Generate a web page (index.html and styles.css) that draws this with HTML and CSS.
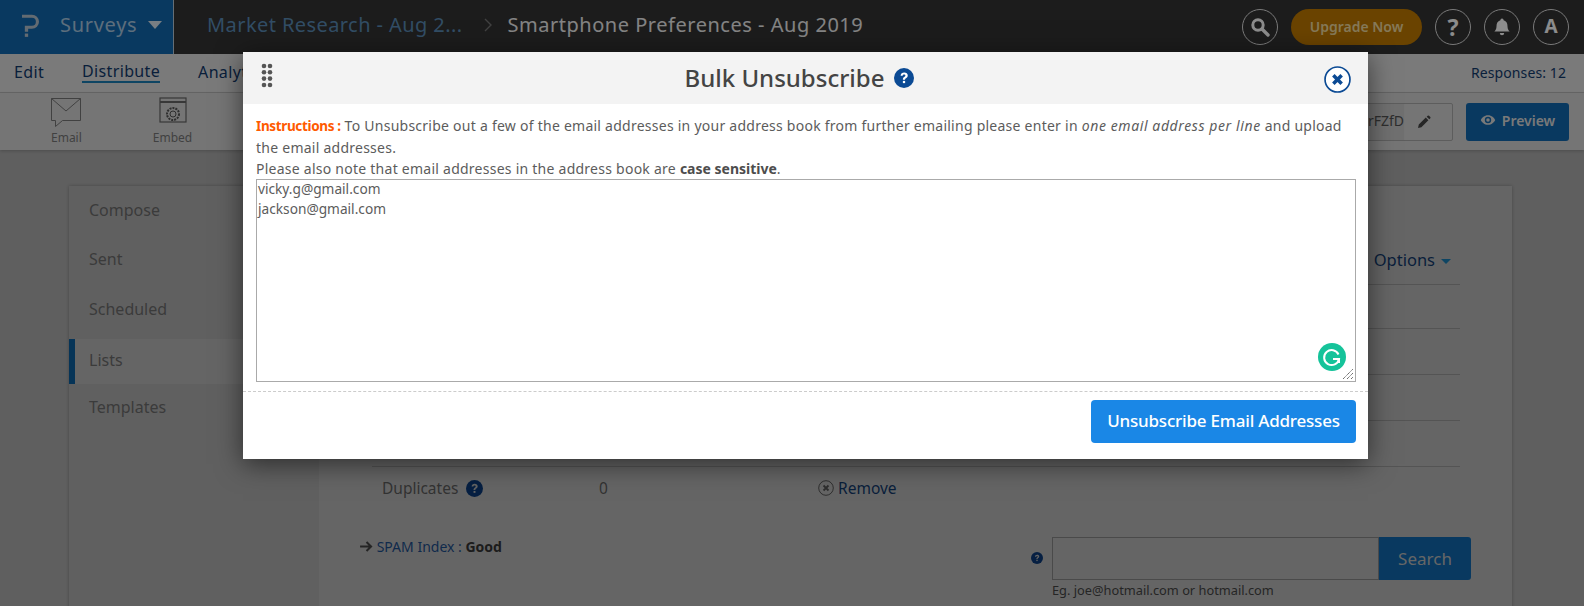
FILE: index.html
```html
<!DOCTYPE html>
<html lang="en">
<head>
<meta charset="utf-8">
<title>Bulk Unsubscribe</title>
<link rel="stylesheet" href="styles.css">
</head>
<body>
<header class="topbar">
  <div class="brand">
    <svg class="logo" viewBox="0 0 18 24"><path d="M0 0h10.500a7.500 7.500 0 0 1 0 15H6.500v3H3v-6.300h7.500a4.200 4.200 0 0 0 0-8.400H0z" fill="#b5c3cf"/><rect x="3" y="20" width="3.500" height="3.500" fill="#b5c3cf"/></svg>
    <span class="brand-name">Surveys</span>
    <span class="caret"></span>
  </div>
  <nav class="crumbs">
    <span class="crumb-link">Market Research - Aug 2...</span>
    <svg class="crumb-sep" viewBox="0 0 8 14"><path d="M1 1l6 6-6 6" fill="none" stroke="#777" stroke-width="1.400"/></svg>
    <span class="crumb-current">Smartphone Preferences - Aug 2019</span>
  </nav>
  <div class="top-actions">
    <span class="round"><svg viewBox="0 0 20 20" class="ri"><circle cx="8" cy="8" r="5.200" fill="none" stroke="#fff" stroke-width="3"/><path d="M12 12l6 6" stroke="#fff" stroke-width="3.400" stroke-linecap="round"/></svg></span>
    <span class="upgrade">Upgrade Now</span>
    <span class="round round-text round-q">?</span>
    <span class="round"><svg viewBox="0 0 20 20" class="ri"><path d="M10 1.500a1.600 1.600 0 0 1 1.600 1.700c3 .8 3.900 3.300 3.900 6 0 3 1.100 4.200 2.200 5.300H2.300c1.100-1.100 2.200-2.300 2.200-5.300 0-2.700.9-5.200 3.900-6A1.600 1.600 0 0 1 10 1.500zM7.800 16h4.400a2.200 2.200 0 0 1-4.400 0z" fill="#fff"/></svg></span>
    <span class="round round-text">A</span>
  </div>
</header>

<div class="subnav">
  <div class="subnav-links">
    <a class="subnav-link">Edit</a>
    <a class="subnav-link is-active">Distribute</a>
    <a class="subnav-link">Analytics</a>
  </div>
  <span class="responses">Responses: 12</span>
</div>

<div class="toolbar">
  <div class="tools">
    <div class="tool">
      <svg class="tool-icon" viewBox="0 0 30 30"><path d="M.5 1.500h29v22h-18l-7 6v-6h-4z" fill="none" stroke="#777" stroke-width="1"/><path d="M.5 1.500L15 14 29.500 1.500" fill="none" stroke="#777" stroke-width="1"/></svg>
      <span>Email</span>
    </div>
    <div class="tool">
      <svg class="tool-icon" viewBox="0 0 30 30"><rect x="2" y="1" width="26" height="24" fill="none" stroke="#666" stroke-width="1.200"/><path d="M2 5h26" stroke="#666" stroke-width="2"/><circle cx="15" cy="17" r="6" fill="none" stroke="#555" stroke-width="2" stroke-dasharray="2 1"/><circle cx="15" cy="17" r="3" fill="none" stroke="#555"/></svg>
      <span>Embed</span>
    </div>
  </div>
  <div class="toolbar-right">
    <div class="link-box"><span class="link-text">lrFZfD</span><span class="link-edit"><svg viewBox="0 0 14 14" class="pencil"><path d="M1 13l.8-3.400 7-7 2.600 2.600-7 7zM9.700 1.700l1-1a1 1 0 0 1 1.300 0l1.300 1.300a1 1 0 0 1 0 1.300l-1 1z" fill="#444"/></svg></span></div>
    <button class="preview"><svg viewBox="0 0 20 14" class="eye"><path d="M10 1C5.500 1 2.300 4 1 7c1.300 3 4.500 6 9 6s7.700-3 9-6c-1.300-3-4.500-6-9-6zm0 10a4 4 0 1 1 0-8 4 4 0 0 1 0 8z" fill="#ddd"/><circle cx="10" cy="7" r="2.200" fill="#ddd"/></svg>Preview</button>
  </div>
</div>

<main class="content">
  <section class="card">
    <aside class="side">
      <a class="side-item">Compose</a>
      <a class="side-item">Sent</a>
      <a class="side-item">Scheduled</a>
      <a class="side-item is-active">Lists</a>
      <a class="side-item">Templates</a>
    </aside>
    <div class="main">
      <div class="options-row"><span class="options">Options<span class="mini-caret"></span></span></div>
      <div class="line-row line-first"></div>
      <div class="line-row"></div>
      <div class="line-row"></div>
      <div class="line-row"></div>
      <div class="dup-row">
        <span class="dup-label">Duplicates <svg class="help" viewBox="0 0 16 16"><circle cx="8" cy="8" r="8" fill="#0b3a78"/><path d="M5.300 6.200C5.400 4.500 6.600 3.600 8.200 3.600c1.600 0 2.800.9 2.800 2.300 0 1.200-.7 1.700-1.400 2.200-.6.400-.8.700-.8 1.300H7.100c0-1.100.3-1.700 1-2.200.6-.4 1-.7 1-1.200 0-.5-.4-.8-1-.8-.7 0-1.100.4-1.200 1z" fill="#b5b5b5"/><rect x="7.100" y="10.300" width="1.800" height="1.800" fill="#b5b5b5"/></svg></span>
        <span class="dup-count">0</span>
        <span class="dup-remove"><svg class="remove-icon" viewBox="0 0 16 16"><circle cx="8" cy="8" r="7.300" fill="none" stroke="#555" stroke-width="1"/><path d="M5.500 5.500l5 5m0-5l-5 5" stroke="#555" stroke-width="1.800"/></svg>Remove</span>
      </div>
      <div class="bottom-row">
        <div class="spam"><svg class="arrow" viewBox="0 0 14 12"><path d="M0 6h11M7 1l5 5-5 5" fill="none" stroke="#444" stroke-width="2.200"/></svg> <span class="spam-label">SPAM Index :</span> <b>Good</b></div>
        <div class="search-wrap">
          <svg class="help help-small" viewBox="0 0 16 16"><circle cx="8" cy="8" r="8" fill="#0b3a78"/><path d="M5.300 6.200C5.400 4.500 6.600 3.600 8.200 3.600c1.600 0 2.800.9 2.800 2.300 0 1.200-.7 1.700-1.400 2.200-.6.400-.8.700-.8 1.300H7.100c0-1.100.3-1.700 1-2.200.6-.4 1-.7 1-1.200 0-.5-.4-.8-1-.8-.7 0-1.100.4-1.200 1z" fill="#b5b5b5"/><rect x="7.100" y="10.300" width="1.800" height="1.800" fill="#b5b5b5"/></svg>
          <div class="search-col">
            <div class="search-box"><span class="search-input"></span><span class="search-btn">Search</span></div>
            <div class="search-hint">Eg. joe@hotmail.com or hotmail.com</div>
          </div>
        </div>
      </div>
    </div>
  </section>
</main>

<div class="overlay"></div>

<div class="modal">
  <div class="modal-head">
    <svg class="grip" viewBox="0 0 12 25"><g fill="#555"><circle cx="3" cy="3" r="2.300"/><circle cx="9" cy="3" r="2.300"/><circle cx="3" cy="9.300" r="2.300"/><circle cx="9" cy="9.300" r="2.300"/><circle cx="3" cy="15.600" r="2.300"/><circle cx="9" cy="15.600" r="2.300"/><circle cx="3" cy="22" r="2.300"/><circle cx="9" cy="22" r="2.300"/></g></svg>
    <h2 class="modal-title">Bulk Unsubscribe <svg class="title-help" viewBox="0 0 16 16"><circle cx="8" cy="8" r="8" fill="#0b4a94"/><path d="M5.300 6.200C5.400 4.500 6.600 3.600 8.200 3.600c1.600 0 2.800.9 2.800 2.300 0 1.200-.7 1.700-1.400 2.200-.6.400-.8.700-.8 1.300H7.100c0-1.100.3-1.700 1-2.200.6-.4 1-.7 1-1.200 0-.5-.4-.8-1-.8-.7 0-1.100.4-1.200 1z" fill="#fff"/><rect x="7.100" y="10.300" width="1.800" height="1.800" fill="#fff"/></svg></h2>
    <svg class="close" viewBox="0 0 26 26"><circle cx="13" cy="13" r="12" fill="#fff" stroke="#0b4a94" stroke-width="1.600"/><path d="M9 9l8 8m0-8l-8 8" stroke="#0b4a94" stroke-width="3.400"/></svg>
  </div>
  <div class="modal-body">
    <p class="instructions"><b class="instr-label">Instructions :</b> To Unsubscribe out a few of the email addresses in your address book from further emailing please enter in <i>one email address per line</i> and upload the email addresses.<br>Please also note that email addresses in the address book are <b>case sensitive</b>.</p>
    <div class="area">
      <div class="area-text">vicky.g@gmail.com<br>jackson@gmail.com</div>
      <svg class="grammarly" viewBox="0 0 28 28"><circle cx="14" cy="14" r="14" fill="#15c39a"/><path d="M20.500 11.500A7.500 7.500 0 1 0 21 16h-6" fill="none" stroke="#fff" stroke-width="2"/><path d="M21 16v4" stroke="#fff" stroke-width="2"/></svg>
      <svg class="resize" viewBox="0 0 12 12"><path d="M1 11L11 1M5 11l6-6M9 11l2-2" stroke="#555" stroke-width="1" fill="none" stroke-dasharray="1.200 .6"/></svg>
    </div>
  </div>
  <div class="modal-foot"><button class="primary">Unsubscribe Email Addresses</button></div>
</div>
</body>
</html>
```
FILE: styles.css
```css
* { box-sizing: border-box; }
html, body { margin: 0; height: 606px; overflow: hidden; }
body { position: relative; background: #adadad; font-family: "Noto Sans", "Open Sans", sans-serif; color: #333; }

.topbar { display: flex; align-items: stretch; height: 54px; background: #333; }
.brand { width: 174px; display: flex; align-items: center; padding: 0 0 5px 22px; background: #1269af; border-right: 1px solid #b9c8d6; }
.logo { width: 17px; height: 24px; margin: 3px 21px 0 0; }
.brand-name { font-size: 20px; letter-spacing: .7px; color: #a9c8e2; }
.caret { margin-left: 11px; border-left: 7px solid transparent; border-right: 7px solid transparent; border-top: 8px solid #dbe6ef; }
.crumbs { display: flex; align-items: center; padding: 0 0 5px 33px; font-size: 20px; flex: 1; }
.crumb-link { color: #5b8db8; letter-spacing: .42px; }
.crumb-sep { width: 8px; height: 14px; margin: 0 16px 0 21px; }
.crumb-current { color: #f0f0f0; letter-spacing: .52px; }
.top-actions { display: flex; align-items: center; gap: 13px; padding-right: 15px; }
.round { width: 36px; height: 36px; border-radius: 50%; border: 1px solid #ddd; display: flex; align-items: center; justify-content: center; color: #fff; }
.round-text { font-size: 19px; font-weight: 700; padding-bottom: 2px; }
.round-q { font-size: 23px; padding-bottom: 0; }
.ri { width: 20px; height: 20px; }
.upgrade { width: 131px; height: 36px; border-radius: 18px; background: #c17a00; color: #f2dca0; font-size: 14px; font-weight: 600; display: flex; align-items: center; justify-content: center; padding-bottom: 2px; }

.subnav { height: 39px; background: #dedede; border-bottom: 1px solid #bbb; display: flex; justify-content: space-between; align-items: center; padding: 0 18px 2px 14px; }
.subnav-links { display: flex; gap: 38px; }
.subnav-link { font-size: 16px; letter-spacing: .35px; color: #123a6c; }
.subnav-link.is-active { border-bottom: 2px solid #1a7fb5; line-height: 20px; }
.responses { font-size: 14px; letter-spacing: .1px; color: #123a6c; }

.toolbar { height: 57px; background: #d5d5d5; display: flex; justify-content: space-between; align-items: center; padding: 0 15px 0 51px; box-shadow: 0 1px 3px rgba(0,0,0,.2); }
.tools { display: flex; gap: 71px; }
.tool { display: flex; flex-direction: column; align-items: center; gap: 2px; font-size: 12px; color: #777; }
.tool-icon { width: 30px; height: 30px; }
.toolbar-right { display: flex; align-items: center; gap: 13px; }
.link-box { display: flex; align-items: center; height: 38px; border: 1px solid #aaa; border-radius: 2px; width: 110px; overflow: hidden; font-size: 14px; }
.link-text { flex: 1; text-align: right; color: #555; background: #ccc; height: 100%; line-height: 34px; white-space: nowrap; }
.link-edit { width: 48px; flex: none; display: flex; justify-content: center; padding-right: 8px; }
.pencil { width: 14px; height: 14px; }
.preview { width: 103px; height: 38px; padding: 0 0 3px; background: #1269af; border: 0; border-radius: 3px; color: #ddd; font: 600 14px "Noto Sans", sans-serif; display: flex; align-items: center; justify-content: center; gap: 6px; }
.eye { width: 16px; height: 12px; }

.content { padding: 36px 72px 0 69px; }
.card { display: grid; grid-template-columns: 250px 1fr; background: #b9b9b9; height: 430px; box-shadow: 0 0 3px rgba(0,0,0,.25); }
.side { background: #b0b0b0; }
.side-item { display: flex; align-items: center; height: 49.500px; padding: 0 0 2px 20px; font-size: 16px; color: #6c6c6c; }
.side-item.is-active { height: 45px; margin: 4px 0 0; background: #b9b9b9; border-left: 6px solid #0c5f9e; padding-left: 14px; }
.main { padding: 0 52px 0 53px; }
.options-row { height: 99px; display: flex; justify-content: flex-end; align-items: flex-end; border-bottom: 1px solid #999; padding: 0 9px 13px 0; }
.options { color: #123a6c; font-size: 16.500px; }
.mini-caret { display: inline-block; margin-left: 6px; vertical-align: middle; border-left: 5px solid transparent; border-right: 5px solid transparent; border-top: 5px solid #1a7fb5; }
.line-row { height: 46px; border-bottom: 1px solid #999; }
.line-first { height: 44px; }
.dup-row { display: grid; grid-template-columns: 217px 219px auto; align-items: center; height: 42px; padding-left: 10px; font-size: 15.500px; color: #5d5d5d; }
.help { width: 17px; height: 17px; vertical-align: -3px; margin-left: 4px; }
.dup-remove { color: #123a6c; display: flex; align-items: center; gap: 4px; }
.remove-icon { width: 16px; height: 16px; }
.bottom-row { display: flex; justify-content: space-between; align-items: flex-start; padding: 24px 0 0; margin: 0 -11px 0 -12px; }
.spam { font-size: 14px; color: #1d4d8a; margin-top: 4px; }
.spam b { color: #333; font-size: 14px; }
.arrow { width: 13px; height: 11px; }
.search-wrap { display: flex; align-items: flex-start; margin-top: 4px; }
.help-small { width: 12px; height: 12px; margin: 15px 9px 0 0; }
.search-box { display: flex; width: 419px; height: 43px; }
.search-input { flex: 1; background: #b9b9b9; border: 1px solid #888; }
.search-btn { width: 92px; background: #1269af; color: #bbb; font-size: 17px; display: flex; align-items: center; justify-content: center; border-radius: 0 3px 3px 0; }
.search-hint { font-size: 12.800px; color: #444; margin-top: 1px; white-space: nowrap; }

.overlay { position: absolute; inset: 0; background: rgba(0,0,0,.45); }

.modal { position: absolute; left: 243px; top: 52px; width: 1125px; height: 407px; background: #fff; box-shadow: 0 5px 25px rgba(0,0,0,.55); display: flex; flex-direction: column; }
.modal-head { position: relative; height: 52px; flex: none; background: #f3f3f3; display: flex; align-items: center; justify-content: center; padding: 0 12px 1px 0; }
.grip { position: absolute; left: 18px; top: 11px; width: 12px; height: 25px; }
.modal-title { margin: 0; font-size: 24px; font-weight: 500; color: #444; display: flex; align-items: center; gap: 10px; line-height: 30px; }
.title-help { width: 20px; height: 20px; }
.close { position: absolute; right: 17px; top: 14px; width: 27px; height: 27px; }
.modal-body { flex: 1; padding: 11px 12px 0 13px; }
.instructions { margin: 0; font-size: 14px; line-height: 21px; color: #5c5c5c; letter-spacing: .25px; }
.instructions i { letter-spacing: .6px; }
.instructions b { letter-spacing: 0; color: #4d4d4d; }
.instructions .instr-label { color: #ff5a00; font-size: 13.500px; letter-spacing: -.35px; }
.area { position: relative; height: 203px; border: 1px solid #aaa; padding: 0 1px; }
.area-text { font-size: 13.700px; line-height: 20px; color: #5c5c5c; margin-top: -1px; }
.grammarly { position: absolute; right: 9px; bottom: 10px; width: 28px; height: 28px; }
.resize { position: absolute; right: 1px; bottom: 1px; width: 12px; height: 12px; }
.modal-foot { flex: none; height: 68px; border-top: 1px dashed #ccc; display: flex; justify-content: flex-end; padding: 8px 12px 0 0; }
.primary { width: 265px; height: 43px; padding: 0 0 2px; background: #1a87e6; color: #fff; border: 0; border-radius: 4px; font: 500 17px "Noto Sans", sans-serif; letter-spacing: -.2px; }
```
